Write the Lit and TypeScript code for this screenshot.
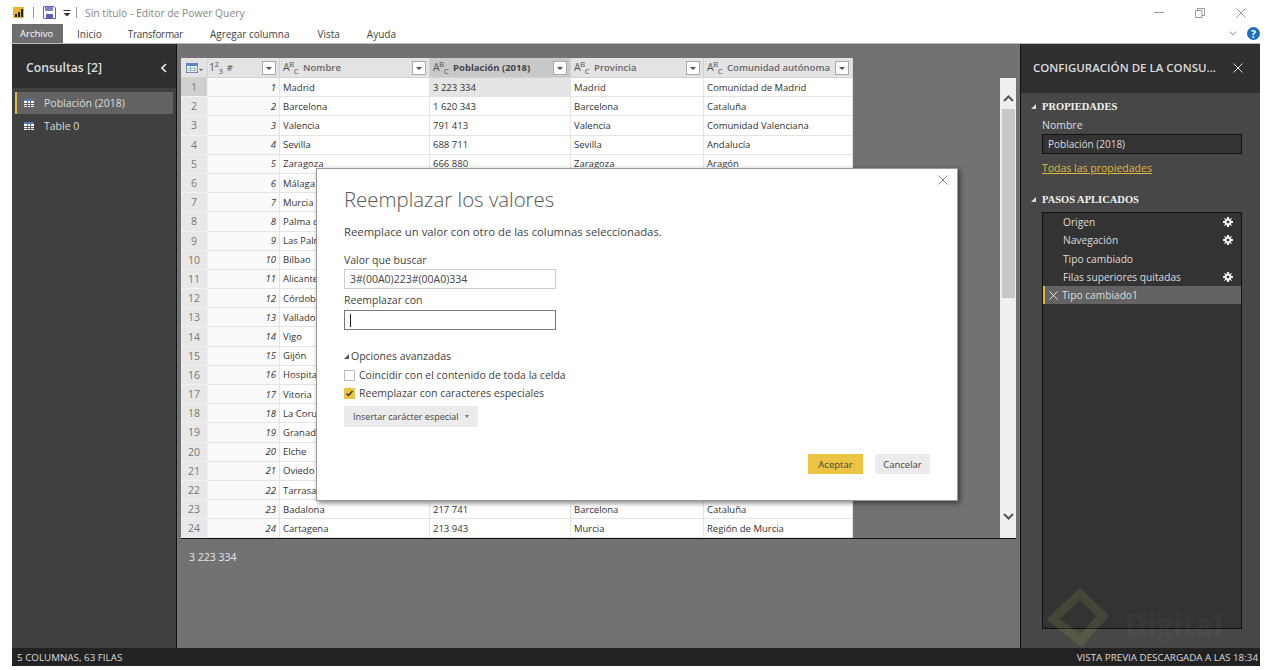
import { LitElement, html, css, svg } from "lit";
import { customElement } from "lit/decorators.js";

// only the rows the dialog does not hide have values in the last three columns
const rows: [string, string, string, string][] = [
    ["Madrid", "3 223 334", "Madrid", "Comunidad de Madrid"],
    ["Barcelona", "1 620 343", "Barcelona", "Cataluña"],
    ["Valencia", "791 413", "Valencia", "Comunidad Valenciana"],
    ["Sevilla", "688 711", "Sevilla", "Andalucía"],
    ["Zaragoza", "666 880", "Zaragoza", "Aragón"],
    ["Málaga", "", "", ""],
    ["Murcia", "", "", ""],
    ["Palma de Mallorca", "", "", ""],
    ["Las Palmas", "", "", ""],
    ["Bilbao", "", "", ""],
    ["Alicante", "", "", ""],
    ["Córdoba", "", "", ""],
    ["Valladolid", "", "", ""],
    ["Vigo", "", "", ""],
    ["Gijón", "", "", ""],
    ["Hospitalet", "", "", ""],
    ["Vitoria", "", "", ""],
    ["La Coruña", "", "", ""],
    ["Granada", "", "", ""],
    ["Elche", "", "", ""],
    ["Oviedo", "", "", ""],
    ["Tarrasa", "", "", ""],
    ["Badalona", "217 741", "Barcelona", "Cataluña"],
    ["Cartagena", "213 943", "Murcia", "Región de Murcia"],
];

const tableIcon = (head: string, line: string) => svg`<svg width="10" height="8" viewBox="0 0 10 8" shape-rendering="crispEdges" style="flex:none">
    <rect width="10" height="8" fill="#fff"/>
    <rect width="10" height="2" fill="${head}"/>
    <path d="M3.500 2V8M6.500 2V8M0 4.500H10M0 6.500H10" stroke="${line}" stroke-width="1"/>
</svg>`;

const gridIcon = svg`<svg width="12" height="10" viewBox="0 0 12 10" shape-rendering="crispEdges" style="flex:none">
    <rect x=".5" y=".5" width="11" height="9" fill="#fff" stroke="#5b87bd"/>
    <rect width="12" height="3" fill="#5b87bd"/>
    <path d="M4.500 3V10M8.500 3V10M0 5.500H12M0 7.500H12" stroke="#9db8d6"/>
</svg>`;

const gear = svg`<svg width="10" height="10" viewBox="0 0 10 10">
    <path d="M4 0h2v1.600l1.200.5L8.400 1 9 1.600 7.900 2.800l.5 1.200H10v2H8.400l-.5 1.200L9 8.400 8.400 9 7.200 7.900l-1.200.5V10H4V8.400l-1.200-.5L1.600 9 1 8.400l1.100-1.200L1.600 6H0V4h1.600l.5-1.200L1 1.600 1.600 1l1.200 1.100L4 1.600Z" fill="#eee"/>
    <circle cx="5" cy="5" r="1.300" fill="#333"/>
</svg>`;

const closeX = (size: number, color: string) => svg`<svg width="${size}" height="${size}" viewBox="0 0 10 10" style="flex:none">
    <path d="M.5.5l9 9M9.500.5l-9 9" stroke="${color}" stroke-width="1" fill="none"/>
</svg>`;

const chevron = (up: boolean) => svg`<svg width="11" height="7" viewBox="0 0 11 7">
    <path d="${up ? "M1 6l4.500-4.500L10 6" : "M1 1l4.500 4.500L10 1"}" stroke="#555" stroke-width="2" fill="none"/>
</svg>`;

const abc = html`<span class="abc">A<sup>B</sup><sub>C</sub></span>`;
const filterBtn = html`<span class="filter"></span>`;

@customElement("app-root")
export class AppRoot extends LitElement {
    static styles = css`
        :host {
            display: flex;
            flex-direction: column;
            width: 1270px;
            height: 670px;
            background: #fff;
            font-family: "Open Sans", "Liberation Sans", sans-serif;
            font-size: 10px;
            color: #333;
            overflow: hidden;
            position: relative;
        }

        .titlebar {
            display: flex;
            align-items: center;
            height: 24px;
            box-sizing: border-box;
            padding: 1px 0 0 13px;
            flex: none;
        }
        .logo {
            width: 11px;
            height: 11px;
            background: #e8b92c;
            display: flex;
            align-items: flex-end;
            justify-content: center;
            gap: 1px;
            padding-bottom: 1px;
            box-sizing: border-box;
        }
        .logo i {
            width: 2px;
            background: #222;
        }
        .sep {
            width: 1px;
            height: 11px;
            background: #999;
        }
        .sep.a {
            margin: 0 9px 0 9px;
        }
        .sep.b {
            margin: 0 8px 0 5px;
        }
        .title {
            color: #888;
            font-size: 10.3px;
        }
        .winbtns {
            margin-left: auto;
            display: flex;
            align-items: center;
            gap: 31px;
            padding-right: 24px;
            height: 100%;
        }
        .min {
            width: 10px;
            height: 1px;
            background: #999;
        }

        .tabs {
            display: flex;
            align-items: stretch;
            height: 19px;
            margin: 0 10px 0 12px;
            flex: none;
            border-bottom: 1px solid #bbb;
            color: #444;
            font-size: 10px;
        }
        .tabs span {
            display: flex;
            align-items: center;
        }
        .tabs .file {
            background: #6e6e6e;
            color: #fff;
            padding: 0 8px;
            margin-right: 14px;
            width: 51px;
            box-sizing: border-box;
            font-size: 9.5px;
        }
        .tabs .t1 { margin-right: 26px; }
        .tabs .t2 { margin-right: 27px; letter-spacing: -0.3px; }
        .tabs .t3 { margin-right: 28px; }
        .tabs .t4 { margin-right: 27px; }
        .tabs .help {
            margin-left: auto;
            gap: 10px;
        }
        .help b {
            width: 13px;
            height: 13px;
            border-radius: 50%;
            background: #1f6fc0;
            color: #fff;
            font-size: 10px;
            display: flex;
            align-items: center;
            justify-content: center;
        }

        .main {
            flex: 1;
            min-height: 0;
            display: flex;
            margin: 0 10px 0 12px;
        }

        .queries {
            width: 164px;
            flex: none;
            background: #404040;
            border-right: 1px solid #111;
            color: #eee;
        }
        .queries header {
            height: 44px;
            box-sizing: border-box;
            background: #2f2f2f;
            display: flex;
            align-items: center;
            justify-content: space-between;
            padding: 3px 9px 0 14px;
            font-size: 12.2px;
            font-weight: 600;
            color: #ddd;
        }
        .qlist {
            padding: 4px 0 0 3px;
        }
        .qitem {
            width: 158px;
            box-sizing: border-box;
            height: 22px;
            display: flex;
            align-items: center;
            gap: 10px;
            padding-left: 9px;
            font-size: 10.5px;
            color: #ddd;
        }
        .qitem + .qitem {
            margin-top: 1px;
        }
        .qitem.sel {
            background: #636363;
            border-left: 2px solid #e0b93c;
            padding-left: 7px;
        }

        .center {
            flex: 1;
            min-width: 0;
            background: #727272;
            display: flex;
            flex-direction: column;
            position: relative;
        }
        .gridwrap {
            margin: 14px 4px 0 4px;
            height: 480px;
            border-bottom: 1px solid #111;
            display: flex;
            justify-content: space-between;
            flex: none;
        }
        .grid {
            width: 672px;
            display: grid;
            grid-template-columns: 27px 72px 150px 141px 133px 149px;
            grid-template-rows: 20px repeat(23, 19.2px) 18.4px;
            background: #fff;
            font-size: 9.5px;
            color: #333;
        }
        .grid > div {
            display: flex;
            align-items: center;
            box-sizing: border-box;
            border-bottom: 1px solid #e4e4e4;
            border-right: 1px solid #e4e4e4;
            white-space: nowrap;
            overflow: hidden;
        }
        .grid .hd {
            background: #e3e3e3;
            border-color: #d4d4d4;
            font-weight: 600;
            color: #666;
            padding-left: 3px;
            gap: 5px;
        }
        .grid .hd.first {
            padding-left: 5px;
            gap: 1px;
        }
        .grid .hd.first::after {
            content: "";
            border: 2px solid transparent;
            border-top: 2px solid #555;
            border-bottom: 0;
            margin-top: 5px;
        }
        .grid .hd.idxhd {
            padding-left: 1px;
            gap: 2px;
        }
        .grid .hd.on {
            background: #c9c9c9;
            color: #444;
            font-weight: 700;
        }
        .grid .hd .name {
            flex: 1;
            overflow: hidden;
        }
        .abc {
            font-size: 10.5px;
            font-weight: 400;
            color: #555;
            white-space: nowrap;
            letter-spacing: -0.6px;
            line-height: 1;
        }
        .abc sup, .abc sub {
            font-size: 8px;
            line-height: 0;
        }
        .filter {
            width: 14px;
            height: 14px;
            flex: none;
            box-sizing: border-box;
            background: #fff;
            border: 1px solid #aaa;
            margin-right: 3px;
            position: relative;
        }
        .filter::after {
            content: "";
            position: absolute;
            left: 3px;
            top: 5px;
            border: 3px solid transparent;
            border-top: 3px solid #555;
            border-bottom: 0;
        }
        .grid .num {
            background: #e8e8e8;
            color: #777;
            font-size: 10.5px;
            justify-content: center;
            border-color: #f2f2f2;
        }
        .grid .num.on {
            background: #d0d0d0;
        }
        .grid .idx {
            background: #fafafa;
            justify-content: flex-end;
            font-style: italic;
            padding-right: 3px;
        }
        .grid .cell {
            padding-left: 3px;
        }
        .grid .cell.on {
            background: #e4e4e4;
        }

        .scroll {
            width: 16px;
            margin-top: 20px;
            background: #efefef;
            display: flex;
            flex-direction: column;
            align-items: center;
            justify-content: space-between;
            padding: 17px 0 18px;
            box-sizing: border-box;
            position: relative;
        }
        .thumb {
            position: absolute;
            left: 2px;
            right: 1px;
            top: 31px;
            height: 189px;
            background: #c8c8c8;
        }
        .preview {
            padding: 11px 0 0 12px;
            color: #e6e6e6;
            font-size: 10.5px;
        }

        .settings {
            width: 240px;
            flex: none;
            background: #474747;
            border-left: 1px solid #111;
            box-sizing: border-box;
            display: flex;
            flex-direction: column;
            color: #eee;
            position: relative;
            overflow: hidden;
        }
        .settings header {
            height: 49px;
            flex: none;
            box-sizing: border-box;
            background: #2f2f2f;
            display: flex;
            align-items: center;
            justify-content: space-between;
            padding: 0 17px 2px 12px;
            font-size: 11.5px;
            font-weight: 600;
            color: #ddd;
            white-space: nowrap;
        }
        .sec {
            display: flex;
            align-items: center;
            gap: 6px;
            font-family: "Liberation Serif", serif;
            font-weight: 700;
            font-size: 10.5px;
            color: #f2f2f2;
            padding-left: 10px;
        }
        .sec i {
            border-left: 5px solid transparent;
            border-bottom: 5px solid #ddd;
        }
        .props {
            padding-top: 8px;
        }
        .prop-body {
            padding: 6px 18px 0 21px;
            font-size: 10.5px;
            color: #ddd;
        }
        .namebox {
            margin-top: 2px;
            height: 20px;
            background: #333;
            border: 1px solid #111;
            box-sizing: border-box;
            display: flex;
            align-items: center;
            padding-left: 5px;
            font-size: 10px;
        }
        .link {
            display: block;
            margin-top: 7px;
            color: #e0b93c;
            text-decoration: underline;
        }
        .steps-title {
            margin-top: 19px;
        }
        .steps {
            margin: 7px 18px 0 21px;
            height: 417px;
            flex: none;
            background: #333;
            border: 1px solid #111;
            box-sizing: border-box;
            font-size: 10.2px;
            color: #ddd;
        }
        .step {
            height: 18.3px;
            display: flex;
            align-items: center;
            padding: 0 8px 0 20px;
            justify-content: space-between;
        }
        .step.sel {
            background: #636363;
            border-left: 2px solid #e0b93c;
            padding-left: 4px;
            justify-content: flex-start;
            gap: 4px;
        }
        .mark {
            position: absolute;
            left: 26px;
            bottom: -2px;
            opacity: 0.12;
        }
        .markword {
            position: absolute;
            left: 104px;
            bottom: 8px;
            font-size: 30px;
            line-height: 1;
            font-weight: 700;
            color: #fff;
            opacity: 0.025;
        }

        .status {
            height: 18px;
            flex: none;
            margin: 0 10px 4px 12px;
            background: #222;
            color: #ddd;
            font-size: 9.8px;
            display: flex;
            align-items: center;
            justify-content: space-between;
            padding: 0 2px 0 5px;
        }

        .modal {
            position: absolute;
            left: 316px;
            top: 168px;
            width: 642px;
            height: 333px;
            box-sizing: border-box;
            background: #fff;
            border: 1px solid #999;
            box-shadow: 2px 2px 5px rgba(0, 0, 0, 0.5);
            padding: 15px 27px 0;
            color: #444;
            font-size: 10.5px;
        }
        .modal .x {
            position: absolute;
            right: 9px;
            top: 5px;
        }
        .modal h1 {
            margin: 0;
            font-family: "Open Sans", sans-serif;
            font-weight: 300;
            font-size: 20.4px;
            line-height: 30px;
            color: #555;
        }
        .modal p {
            margin: 10px 0 0;
            line-height: 15px;
            font-size: 11.3px;
        }
        .lbl {
            margin-top: 14px;
            line-height: 14px;
        }
        .lbl.second {
            margin-top: 4px;
        }
        .input {
            width: 212px;
            height: 20px;
            box-sizing: border-box;
            border: 1px solid #ccc;
            display: flex;
            align-items: center;
            padding-left: 5px;
            margin-top: 2px;
        }
        .input.focus {
            border-color: #777;
            margin-top: 3px;
        }
        .input.focus i {
            width: 1px;
            height: 13px;
            background: #222;
        }
        .adv {
            margin-top: 19px;
            display: flex;
            align-items: center;
            gap: 2px;
            line-height: 14px;
        }
        .adv i {
            border-left: 5px solid transparent;
            border-bottom: 5px solid #555;
            margin-top: 1px;
        }
        .chk {
            display: flex;
            align-items: center;
            gap: 4px;
            height: 18px;
        }
        .box {
            width: 11px;
            height: 11px;
            box-sizing: border-box;
            border: 1px solid #bbb;
            flex: none;
        }
        .box.on {
            background: #edc343;
            border: 0;
        }
        .box svg {
            display: block;
        }
        .chks {
            margin-top: 3px;
        }
        .special {
            display: flex;
            width: 134px;
            box-sizing: border-box;
            align-items: center;
            justify-content: space-between;
            height: 21px;
            background: #ebebeb;
            padding: 0 9px;
            font-size: 9px;
            margin-top: 4px;
            white-space: nowrap;
        }
        .special i {
            border: 2.500px solid transparent;
            border-top: 3px solid #777;
            border-bottom: 0;
        }
        .actions {
            position: absolute;
            right: 27px;
            bottom: 26px;
            display: flex;
            gap: 12px;
        }
        .actions span {
            width: 55px;
            height: 20px;
            display: flex;
            align-items: center;
            justify-content: center;
            font-size: 9.5px;
            background: #ebebeb;
        }
        .actions .ok {
            background: #edc343;
        }
    `;

    render() {
        return html`
            <div class="titlebar">
                <span class="logo"><i style="height:3px"></i><i style="height:5px"></i><i style="height:8px"></i></span>
                <span class="sep a"></span>
                <svg width="13" height="13" viewBox="0 0 13 13">
                    <path d="M.5.5h10.500l1.500 1.500v10.500h-12Z" fill="#fff" stroke="#5b5fb5"/>
                    <path d="M2 .5h8v4.500H2Z" fill="#7d81d0"/>
                    <path d="M3 8h7v4.500H3Z" fill="#5b5fb5"/>
                </svg>
                <svg style="margin-left:7px" width="8" height="8" viewBox="0 0 8 8">
                    <path d="M.5 1.500h7" stroke="#333"/><path d="M.5 4h7L4 7.500Z" fill="#333"/>
                </svg>
                <span class="sep b"></span>
                <span class="title">Sin título - Editor de Power Query</span>
                <div class="winbtns">
                    <span class="min"></span>
                    <svg width="10" height="10" viewBox="0 0 10 10">
                        <path d="M.5 2.500h6.500v7h-6.500ZM2.500 2.500v-2h7v7h-2.500" fill="none" stroke="#999"/>
                    </svg>
                    ${closeX(10, "#999")}
                </div>
            </div>
            <div class="tabs">
                <span class="file">Archivo</span>
                <span class="t1">Inicio</span>
                <span class="t2">Transformar</span>
                <span class="t3">Agregar columna</span>
                <span class="t4">Vista</span>
                <span>Ayuda</span>
                <span class="help">
                    <svg width="8" height="5" viewBox="0 0 8 5"><path d="M.5.5l3.500 3.500 3.500-3.500" fill="none" stroke="#999"/></svg>
                    <b>?</b>
                </span>
            </div>
            <div class="main">
                <aside class="queries">
                    <header>Consultas [2]
                        <svg width="6" height="10" viewBox="0 0 6 10"><path d="M5 1L1 5l4 4" fill="none" stroke="#eee" stroke-width="1.600"/></svg>
                    </header>
                    <div class="qlist">
                        <div class="qitem sel">${tableIcon("#4a7ab8", "#666")}Población (2018)</div>
                        <div class="qitem">${tableIcon("#4a7ab8", "#666")}Table 0</div>
                    </div>
                </aside>
                <section class="center">
                    <div class="gridwrap">
                        <div class="grid">
                            <div class="hd first">${gridIcon}</div>
                            <div class="hd idxhd"><span class="abc">1<sup>2</sup><sub>3</sub></span><span class="name">&nbsp;#</span>${filterBtn}</div>
                            <div class="hd">${abc}<span class="name">Nombre</span>${filterBtn}</div>
                            <div class="hd on">${abc}<span class="name">Población (2018)</span>${filterBtn}</div>
                            <div class="hd">${abc}<span class="name">Provincia</span>${filterBtn}</div>
                            <div class="hd">${abc}<span class="name">Comunidad autónoma</span>${filterBtn}</div>
                            ${rows.map(
                                (r, i) => html`
                                    <div class="num ${i === 0 ? "on" : ""}">${i + 1}</div>
                                    <div class="idx">${i + 1}</div>
                                    <div class="cell">${r[0]}</div>
                                    <div class="cell ${i === 0 ? "on" : ""}">${r[1]}</div>
                                    <div class="cell">${r[2]}</div>
                                    <div class="cell">${r[3]}</div>
                                `
                            )}
                        </div>
                        <div class="scroll">
                            <span class="thumb"></span>
                            ${chevron(true)} ${chevron(false)}
                        </div>
                    </div>
                    <div class="preview">3 223 334</div>
                </section>
                <aside class="settings">
                    <header>CONFIGURACIÓN DE LA CONSU... ${closeX(10, "#ddd")}</header>
                    <div class="sec props"><i></i>PROPIEDADES</div>
                    <div class="prop-body">
                        Nombre
                        <div class="namebox">Población (2018)</div>
                        <a class="link">Todas las propiedades</a>
                    </div>
                    <div class="sec steps-title"><i></i>PASOS APLICADOS</div>
                    <div class="steps">
                        <div class="step">Origen ${gear}</div>
                        <div class="step">Navegación ${gear}</div>
                        <div class="step">Tipo cambiado</div>
                        <div class="step">Filas superiores quitadas ${gear}</div>
                        <div class="step sel">${closeX(9, "#eee")} Tipo cambiado1</div>
                    </div>
                    <svg class="mark" width="62" height="62" viewBox="0 0 62 62">
                        <path d="M38 56L6 31 33 6 56 28 36 50" fill="none" stroke="#c8d850" stroke-width="9"/>
                    </svg>
                    <span class="markword">Digital</span>
                </aside>
            </div>
            <div class="status"><span>5 COLUMNAS, 63 FILAS</span><span>VISTA PREVIA DESCARGADA A LAS 18:34</span></div>
            <div class="modal">
                <span class="x">${closeX(10, "#888")}</span>
                <h1>Reemplazar los valores</h1>
                <p>Reemplace un valor con otro de las columnas seleccionadas.</p>
                <div class="lbl">Valor que buscar</div>
                <div class="input">3#(00A0)223#(00A0)334</div>
                <div class="lbl second">Reemplazar con</div>
                <div class="input focus"><i></i></div>
                <div class="adv"><i></i>Opciones avanzadas</div>
                <div class="chks">
                    <div class="chk"><span class="box"></span>Coincidir con el contenido de toda la celda</div>
                    <div class="chk">
                        <span class="box on">
                            <svg width="11" height="11" viewBox="0 0 11 11"><path d="M2.500 5.500l2 2 4-4.500" fill="none" stroke="#333" stroke-width="1.400"/></svg>
                        </span>
                        Reemplazar con caracteres especiales
                    </div>
                </div>
                <div class="special">Insertar carácter especial <i></i></div>
                <div class="actions">
                    <span class="ok">Aceptar</span>
                    <span>Cancelar</span>
                </div>
            </div>
        `;
    }
}
